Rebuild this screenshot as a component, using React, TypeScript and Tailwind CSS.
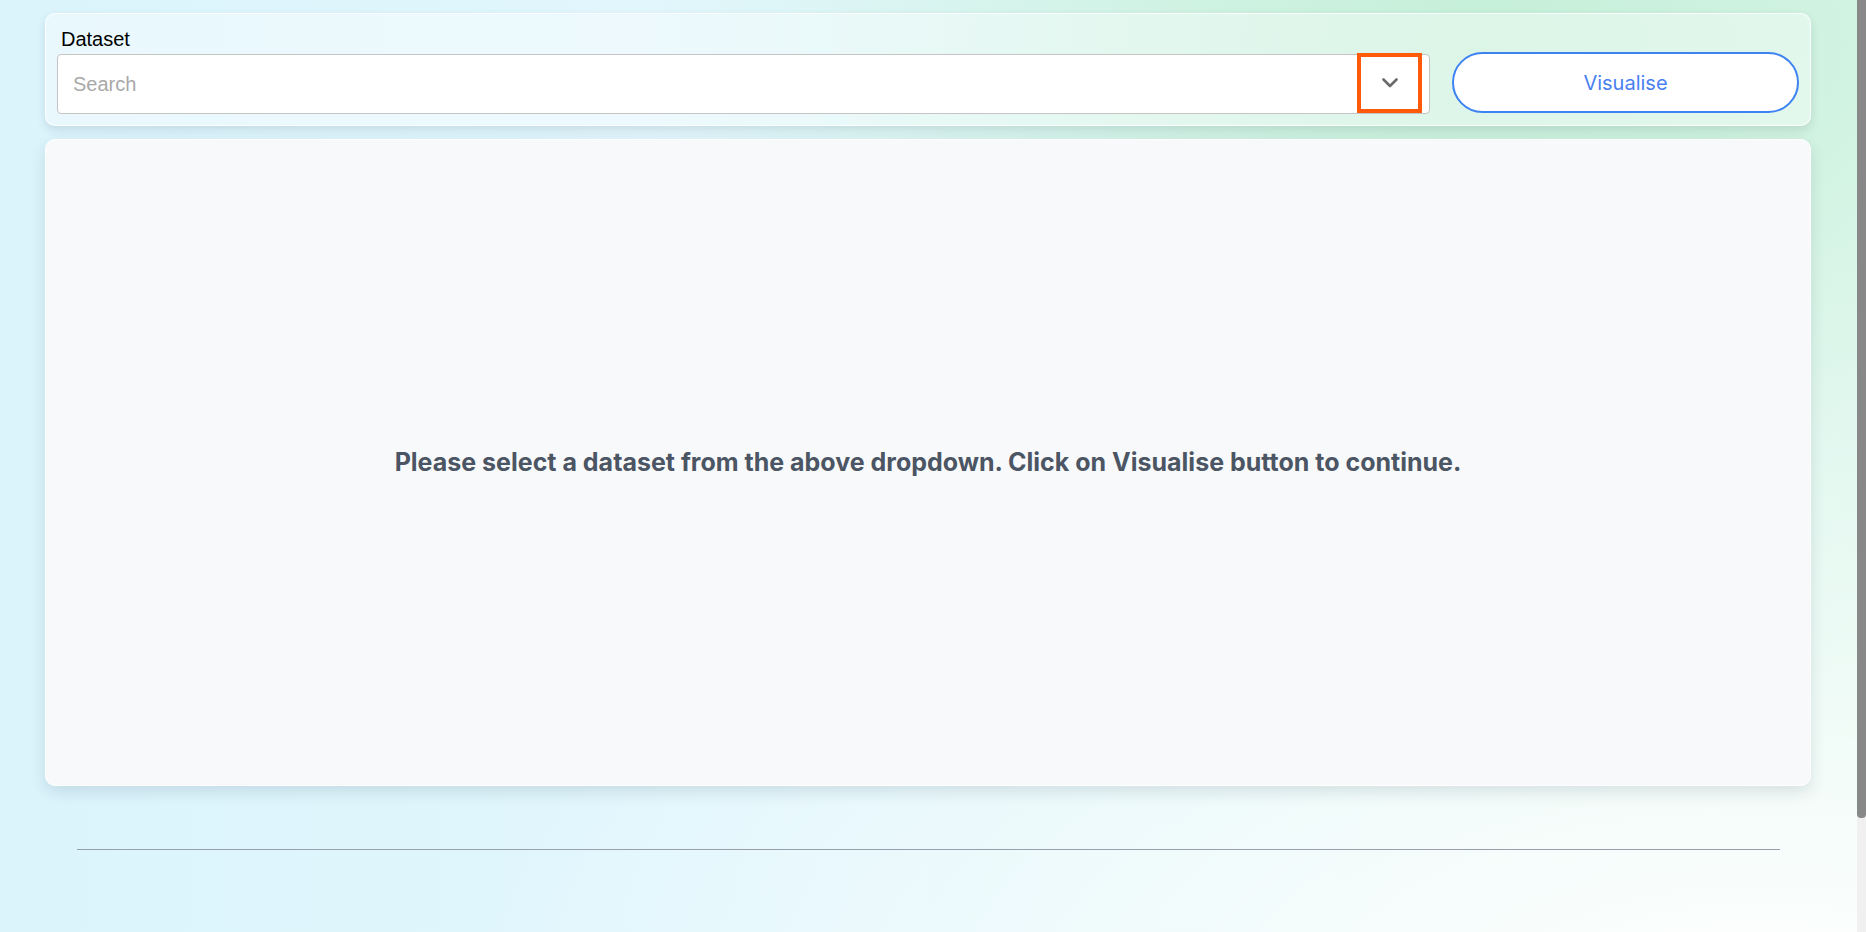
export default function App() {
  return (
    <div className="flex h-[932px] w-full overflow-hidden">
      <div className="h-[1062px] flex-1 bg-[image:radial-gradient(ellipse_45%_40%_at_80%_4%,#c4efd7_0%,rgba(196,239,215,0)_100%),radial-gradient(ellipse_70%_55%_at_95%_95%,#ffffff_0%,rgba(255,255,255,0)_100%),linear-gradient(90deg,#dbf4fc_0%,#e3f7fd_45%,#e2f8ef_100%)] pt-[13px] font-['Inter',sans-serif]">
        {/* barra de selecao */}
        <div className="ml-[45px] mr-[46px]">
          <div className="rounded-[10px] border border-white/80 bg-white/40 p-[11px] shadow-[0_4px_10px_rgba(0,40,60,0.12)]">
            <div className="flex items-end gap-[22px]">
              <div className="flex-1">
                <div className="h-[29px] pl-[4px] pt-[3px] text-[20px] leading-[23px] text-black font-['Liberation_Sans',Arial,sans-serif]">
                  Dataset
                </div>
                <div className="relative h-[60px] rounded-[4px] border border-[#c4c4c4] bg-white">
                  <input
                    placeholder="Search"
                    className="h-full w-full rounded-[4px] bg-transparent pl-[15px] text-[20px] text-gray-800 outline-none placeholder:text-[#a9a9a9] font-['Liberation_Sans',Arial,sans-serif]"
                  />
                  <div className="absolute right-[7px] top-[-2px] flex h-[60px] w-[65px] items-center justify-center border-[4px] border-[#ff5a0a] bg-white">
                    <svg width="16" height="10" viewBox="0 0 16 10" fill="none">
                      <polyline points="1.5,1.5 8,8 14.5,1.5" stroke="#6b6b6b" strokeWidth="2.6" strokeLinecap="round" strokeLinejoin="round" />
                    </svg>
                  </div>
                </div>
              </div>
              <button className="mb-[1px] h-[61px] w-[347px] rounded-full border-2 border-[#3d83f2] bg-white text-[20px] text-[#4a7ff2]">
                Visualise
              </button>
            </div>
          </div>

          {/* area vazia */}
          <div className="mt-[13px] flex h-[647px] items-center justify-center rounded-[10px] border border-white bg-[#f8f9fb] shadow-[0_6px_16px_rgba(0,40,60,0.12)]">
            <p className="text-[25px] font-bold text-[#4b5563]">
              Please select a dataset from the above dropdown. Click on Visualise button to continue.
            </p>
          </div>
        </div>

        <div className="mx-[77px] mt-[63px] border-t border-[#98a0ae]" />
      </div>

      {/* barra de rolagem */}
      <div className="flex h-full w-[9px] flex-col bg-[#f0f0f0]">
        <div className="h-[818px] rounded-b-[4px] bg-[#888888]" />
      </div>
    </div>
  );
}
